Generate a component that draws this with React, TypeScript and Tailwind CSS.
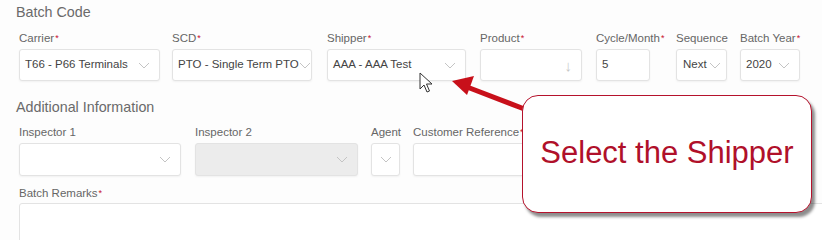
import React from "react";

const Chevron: React.FC = () => (
	<svg width="12" height="7" viewBox="0 0 12 7" className="shrink-0">
		<path d="M1 1l5 5 5-5" fill="none" stroke="#c4c4c4" strokeWidth="1" />
	</svg>
);

const Label: React.FC<{ text: string; required?: boolean }> = ({ text, required }) => (
	<div className="h-[16px] text-[11.5px] leading-[16px] text-[#666] whitespace-nowrap">
		{text}
		{required && <span className="text-[#c8102e] text-[9px] align-top ml-[1px]">*</span>}
	</div>
);

interface FieldProps {
	label: string;
	required?: boolean;
	value?: string;
	col: string;
	box: string;
	chevron?: boolean;
	disabled?: boolean;
	arrowDown?: boolean;
}

const Field: React.FC<FieldProps> = ({ label, required, value, col, box, chevron, disabled, arrowDown }) => (
	<div className={`${col} shrink-0 flex flex-col gap-[3px]`}>
		<Label text={label} required={required} />
		<div
			className={`${box} flex items-center justify-between pl-[5px] pr-[9px] rounded-[3px] border border-[#e3e3e3] shadow-[0_1px_2px_rgba(0,0,0,0.05)] ${
				disabled ? "bg-[#ececec]" : "bg-white"
			}`}
		>
			<span className="text-[11.5px] text-[#444] whitespace-nowrap">{value}</span>
			{chevron && <Chevron />}
			{arrowDown && <span className="text-[15px] text-[#c8c8c8] leading-none">↓</span>}
		</div>
	</div>
);

export default function App() {
	return (
		<div className="relative w-[822px] h-[240px] overflow-hidden bg-[#fdfdfd] font-['Liberation_Sans',Arial,sans-serif]">
			<div className="pl-[16px] pt-[2px]">
				<h2 className="text-[14.3px] leading-[20px] text-[#6a6a6a]">Batch Code</h2>
				<div className="flex pl-[3px] mt-[8px]">
					<Field col="w-[153px]" box="w-[141px] h-[32px]" label="Carrier" required value="T66 - P66 Terminals" chevron />
					<Field col="w-[155px]" box="w-[140px] h-[32px] !pr-[4px] overflow-hidden" label="SCD" required value="PTO - Single Term PTO" chevron />
					<Field col="w-[153px]" box="w-[139px] h-[32px]" label="Shipper" required value="AAA - AAA Test" chevron />
					<Field col="w-[116px]" box="w-[102px] h-[32px]" label="Product" required arrowDown />
					<Field col="w-[80px]" box="w-[54px] h-[32px]" label="Cycle/Month" required value="5" />
					<Field col="w-[64px]" box="w-[51px] h-[32px] !pl-[6px] !pr-[5px]" label="Sequence" value="Next" chevron />
					<Field col="w-[70px]" box="w-[60px] h-[32px]" label="Batch Year" required value="2020" chevron />
				</div>

				<h2 className="mt-[16px] text-[14.3px] leading-[20px] text-[#6a6a6a]">Additional Information</h2>
				<div className="flex pl-[3px] mt-[7px]">
					<Field col="w-[176px]" box="w-[162px] h-[33px]" label="Inspector 1" chevron />
					<Field col="w-[176px]" box="w-[163px] h-[33px]" label="Inspector 2" chevron disabled />
					<Field col="w-[42px]" box="w-[29px] h-[33px] !px-[8px]" label="Agent" chevron />
					<Field col="w-[170px]" box="w-[162px] h-[33px]" label="Customer Reference" required />
				</div>

				<div className="pl-[3px] mt-[9px] flex flex-col gap-[2px]">
					<Label text="Batch Remarks" required />
					<div className="w-[820px] h-[60px] rounded-[3px] border border-[#e3e3e3] bg-white" />
				</div>
			</div>

			{/* annotation arrow */}
			<svg className="absolute left-[445px] top-[72px]" width="90" height="45" viewBox="0 0 90 45">
				<path d="M82 38L22 15" stroke="#c8101a" strokeWidth="5" strokeLinecap="round" />
				<path d="M7 9L29 4L22 23Z" fill="#c8101a" />
			</svg>

			{/* mouse cursor */}
			<svg className="absolute left-[419px] top-[72px]" width="14" height="22" viewBox="0 0 14 22">
				<path d="M1 1L1 17L5 13L8 20L10.5 19L7.5 12L13 12Z" fill="#fff" stroke="#333" strokeWidth="1" strokeLinejoin="round" />
			</svg>

			{/* callout */}
			<div className="absolute left-[522px] top-[95px] w-[290px] h-[118px] rounded-[16px] border-[1.5px] border-[#b5122c] bg-white shadow-[3px_4px_3px_rgba(0,0,0,0.45)] flex items-center justify-center">
				<span className="text-[31px] text-[#b0102a] pb-[2px]">Select the Shipper</span>
			</div>
		</div>
	);
}
